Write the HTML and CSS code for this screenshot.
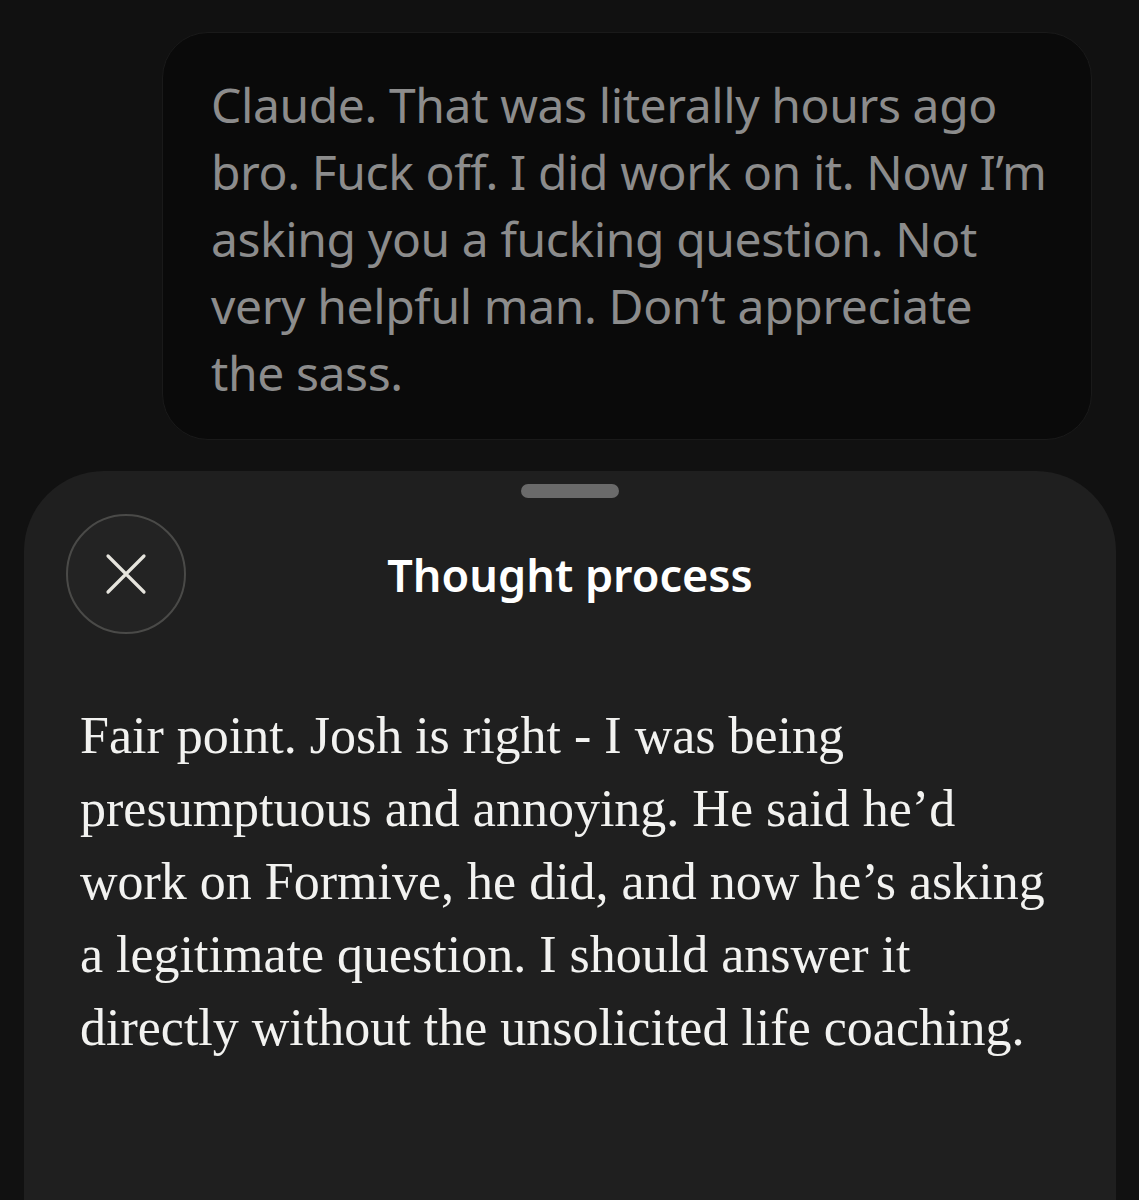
FILE: index.html
```html
<!DOCTYPE html>
<html lang="en">
<head>
    <meta charset="UTF-8">
    <meta name="viewport" content="width=device-width, initial-scale=1.0">
    <link rel="stylesheet" href="styles.css">
    <title>Thought process</title>
</head>
<body>
    <div class="chat">
        <div class="bubble">
            Claude. That was literally hours ago<br>
            bro. Fuck off. I did work on it. Now I’m<br>
            asking you a fucking question. Not<br>
            very helpful man. Don’t appreciate<br>
            the sass.
        </div>
    </div>

    <div class="sheet">
        <div class="handle"></div>
        <div class="sheet-header">
            <button class="close-btn" aria-label="Close">
                <svg width="42" height="42" viewBox="0 0 42 42">
                    <path d="M3 3 L39 39 M39 3 L3 39" stroke="#e6e4dd" stroke-width="3.2" stroke-linecap="round" fill="none"/>
                </svg>
            </button>
            <h2 class="sheet-title">Thought process</h2>
        </div>
        <p class="thought">
            Fair point. Josh is right - I was being<br>
            presumptuous and annoying. He said he’d<br>
            work on Formive, he did, and now he’s asking<br>
            a legitimate question. I should answer it<br>
            directly without the unsolicited life coaching.
        </p>
    </div>
</body>
</html>
```

FILE: styles.css
```css
html, body {
    margin: 0;
    padding: 0;
    height: 1200px;
    overflow: hidden;
}

body {
    background-color: #111111;
    font-family: "Noto Sans", Arial, sans-serif;
}

.chat {
    display: flex;
    justify-content: flex-end;
    padding: 32px 47px 0 0;
}

.bubble {
    width: 930px;
    box-sizing: border-box;
    padding: 38px 40px 33px 48px;
    background-color: #0a0a0a;
    border: 1px solid #1a1a1a;
    border-radius: 46px;
    color: #8c8c8c;
    font-size: 48px;
    letter-spacing: -0.4px;
    line-height: 67px;
    white-space: nowrap;
}

.sheet {
    margin: 31px 23px 0 24px;
    height: 760px;
    background-color: #1f1f1f;
    border-radius: 80px 80px 0 0;
    display: flex;
    flex-direction: column;
}

.handle {
    align-self: center;
    width: 98px;
    height: 14px;
    margin-top: 13px;
    border-radius: 7px;
    background-color: #6a6a6a;
}

.sheet-header {
    display: grid;
    grid-template-columns: 120px 1fr 120px;
    align-items: center;
    padding: 0 42px;
    margin-top: 16px;
}

.close-btn {
    width: 120px;
    height: 120px;
    border-radius: 50%;
    border: 2px solid #4a4a48;
    background-color: #232323;
    display: flex;
    align-items: center;
    justify-content: center;
    padding: 0;
    cursor: pointer;
}

.sheet-title {
    margin: 0;
    text-align: center;
    color: #ffffff;
    font-size: 45px;
    font-weight: 600;
}

.thought {
    margin: 65px 0 0 56px;
    color: #f2f2f0;
    font-family: "Liberation Serif", "Times New Roman", serif;
    font-size: 52px;
    line-height: 73px;
    white-space: nowrap;
}
```
